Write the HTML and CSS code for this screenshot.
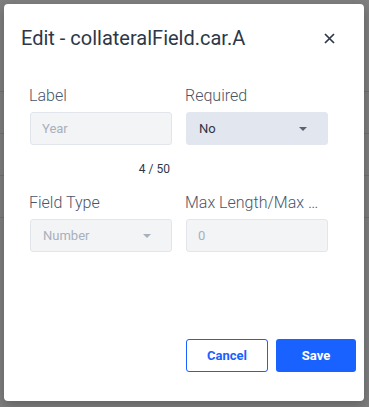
FILE: index.html
```html
<!DOCTYPE html>
<html lang="en">
<head>
    <meta charset="UTF-8">
    <meta name="viewport" content="width=device-width, initial-scale=1.0">
    <title>Edit - collateralField.car.A</title>
    <link rel="stylesheet" href="styles.css">
</head>
<body>

    <div class="modal">
        <div class="modal-header">
            <h2>Edit - collateralField.car.A</h2>
            <button class="close-btn" aria-label="Close">
                <svg width="11" height="11" viewBox="0 0 11 11">
                    <path d="M1 1 L10 10 M10 1 L1 10" stroke="#2d3748" stroke-width="1.7" fill="none"/>
                </svg>
            </button>
        </div>

        <div class="form-grid">
            <div class="field">
                <label>Label</label>
                <input type="text" placeholder="Year" disabled>
                <div class="counter">4 / 50</div>
            </div>
            <div class="field">
                <label>Required</label>
                <div class="select active">No<span class="caret"></span></div>
            </div>

            <div class="field">
                <label>Field Type</label>
                <div class="select disabled">Number<span class="caret"></span></div>
            </div>
            <div class="field">
                <label>Max Length/Max …</label>
                <input type="text" value="0" disabled>
            </div>
        </div>

        <div class="modal-footer">
            <button class="btn btn-outline">Cancel</button>
            <button class="btn btn-primary">Save</button>
        </div>
    </div>

</body>
</html>
```

FILE: styles.css
```css
body {
    margin: 0;
    height: 407px;
    font-family: 'Roboto', 'Liberation Sans', sans-serif;
    background-color: #7f7f7f;
    background-image: linear-gradient(to bottom,
        transparent 91px, #727272 91px, #727272 92px,
        transparent 92px, transparent 133px, #727272 133px, #727272 134px,
        transparent 134px, transparent 175px, #727272 175px, #727272 176px,
        transparent 176px, transparent 217px, #727272 217px, #727272 218px,
        transparent 218px);
    overflow: hidden;
}

.modal {
    position: absolute;
    top: 4px;
    left: 4px;
    width: 360px;
    height: 397px;
    background: white;
    border-radius: 4px;
    box-shadow: 0px 4px 12px rgba(0, 0, 0, 0.25);
    display: flex;
    flex-direction: column;
    box-sizing: border-box;
}

.modal-header {
    display: flex;
    align-items: center;
    justify-content: space-between;
    padding: 22px 29px 0 17px;
}

.modal-header h2 {
    margin: 0;
    font-size: 20px;
    line-height: 24px;
    font-weight: 400;
    color: #2d3748;
}

.close-btn {
    background: none;
    border: none;
    padding: 0;
    width: 11px;
    height: 11px;
    display: flex;
    cursor: pointer;
}

.form-grid {
    display: grid;
    grid-template-columns: 142px 142px;
    column-gap: 14px;
    padding: 36px 0 0 26px;
}

.field {
    display: flex;
    flex-direction: column;
    min-width: 0;
    margin-bottom: 16px;
}

.field label {
    font-size: 16px;
    line-height: 20px;
    font-weight: 300;
    color: #4a5568;
    margin: 0 0 6px -1px;
    white-space: nowrap;
}

.field input, .select {
    height: 33px;
    box-sizing: border-box;
    border-radius: 3px;
    font-family: inherit;
    font-size: 13px;
}

.field input {
    width: 100%;
    padding: 0 11px;
    border: 1px solid #e2e6ec;
    background: #f3f4f6;
    color: #a8b0bc;
}

.field input::placeholder {
    color: #a8b0bc;
}

.counter {
    font-size: 12px;
    line-height: 16px;
    color: #2d3748;
    text-align: right;
    margin-top: 16px;
    padding-right: 2px;
}

.select {
    position: relative;
    display: flex;
    align-items: center;
    padding: 0 12px;
}

.select.active {
    background: #e2e6ee;
    border: 1px solid #e2e6ee;
    color: #2d3748;
}

.select.disabled {
    background: #f3f4f6;
    border: 1px solid #e2e6ec;
    color: #a8b0bc;
}

.caret {
    position: absolute;
    right: 20px;
    top: 14px;
    width: 0;
    height: 0;
    border-left: 4px solid transparent;
    border-right: 4px solid transparent;
    border-top: 4px solid #5a6372;
}

.select.disabled .caret {
    border-top-color: #a8b0bc;
}

.modal-footer {
    margin-top: auto;
    display: flex;
    justify-content: flex-end;
    gap: 8px;
    padding: 0 8px 29px 0;
}

.btn {
    height: 33px;
    border-radius: 3px;
    font-family: inherit;
    font-size: 13px;
    font-weight: bold;
    cursor: pointer;
}

.btn-outline {
    width: 82px;
    background: white;
    color: #1a5fff;
    border: 1px solid #1a5fff;
}

.btn-primary {
    width: 80px;
    background: #1a62ff;
    color: white;
    border: none;
}
```
